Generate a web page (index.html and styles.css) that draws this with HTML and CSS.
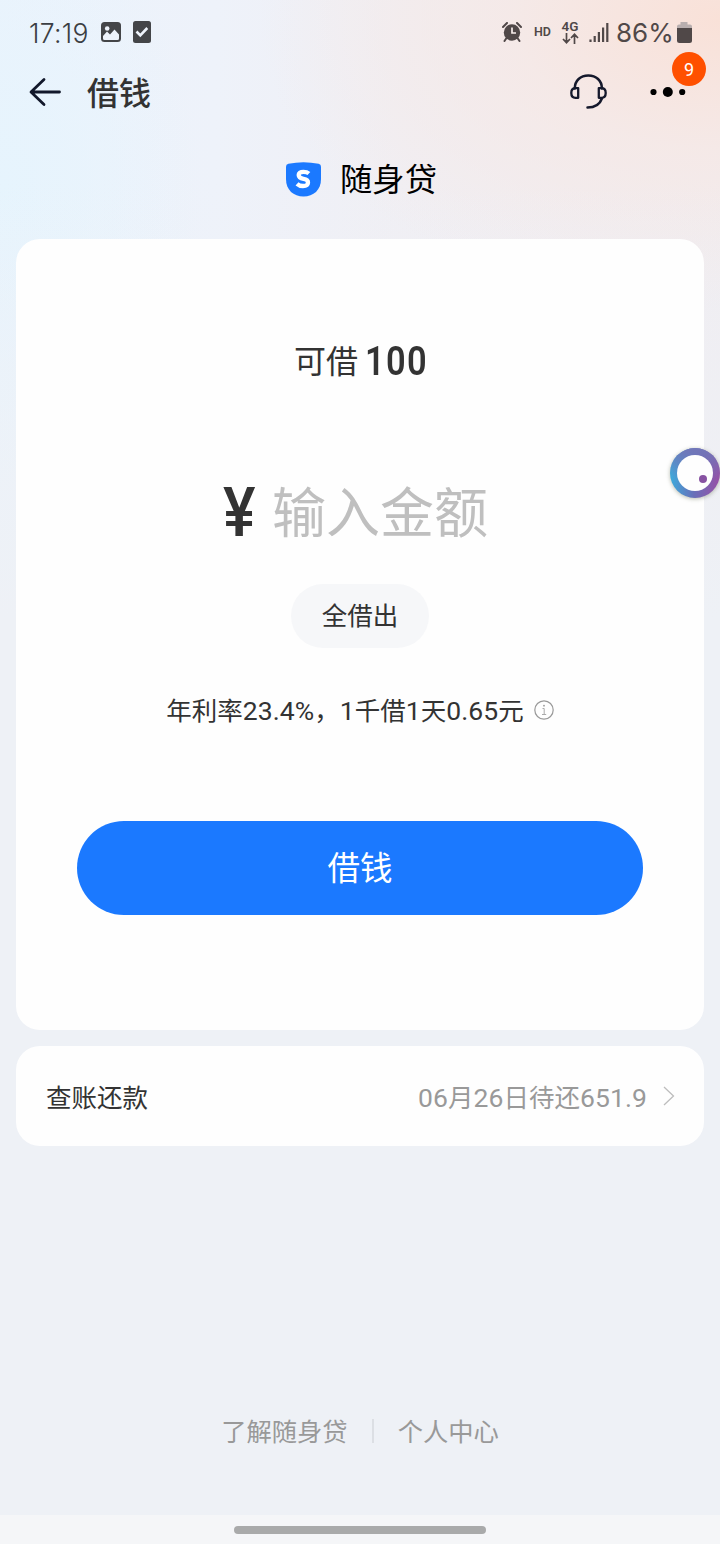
FILE: index.html
```html
<!DOCTYPE html>
<html lang="zh-CN">
<head>
<meta charset="utf-8">
<title>借钱</title>
<link rel="stylesheet" href="styles.css">
</head>
<body>
<div class="screen">
  <div class="status">
    <div class="status-left">
      <span class="clock">17:19</span>
      <svg width="20" height="20" viewBox="0 0 20 20"><rect width="20" height="20" rx="3.5" fill="#444548"/><circle cx="6.2" cy="6.5" r="2.3" fill="#eef3fb"/><path d="M2 16.500V14l4-4.500 3 3 4.500-5 4.500 5v4q0 1.500-1.500 1.500h-13q-1.500 0-1.500-1.500z" fill="#eef3fb"/></svg>
      <svg class="task" width="18" height="22" viewBox="0 0 18 22"><rect width="18" height="22" rx="2.500" fill="#444548"/><path d="M3.500 10.500l3.800 3.800 7-7.300" fill="none" stroke="#eef3fb" stroke-width="2.600"/></svg>
    </div>
    <div class="status-right">
      <svg width="20" height="20" viewBox="0 0 20 20"><circle cx="10" cy="10.500" r="8.200" fill="#504848"/><path d="M1 5l4-4M19 5l-4-4M4.500 16l-2 3M15.500 16l2 3" stroke="#504848" stroke-width="2" stroke-linecap="round"/><path d="M10 5.500v5.500h4" fill="none" stroke="#f7eeec" stroke-width="1.700"/></svg>
      <span class="hd">HD</span>
      <span class="net"><b>4G</b><svg width="17" height="11" viewBox="0 0 17 11"><path d="M4.500 0v9.500M1 6l3.500 3.700L8 6M12.500 11V1.500M9 5l3.500-3.700L16 5" fill="none" stroke="#504848" stroke-width="1.700"/></svg></span>
      <svg class="signal" width="20" height="20" viewBox="0 0 20 20"><path d="M1.500 20v-2.500M5.700 20v-6M9.900 20v-10M14.100 20v-14.500M18.300 20V1" stroke="#504848" stroke-width="2.200"/></svg>
      <span class="percent">86%</span>
      <svg class="battery" width="15" height="21" viewBox="0 0 15 21"><path d="M3.500 0h7v2.500H13q2 0 2 2V7H0V4.500q0-2 2-2h1.500z" fill="#b9afaf"/><path d="M0 6h15v12.500q0 2.500-2.500 2.500h-10Q0 21 0 18.500z" fill="#504848"/></svg>
    </div>
  </div>

  <header class="nav">
    <svg class="back" width="34" height="30" viewBox="0 0 34 30"><path d="M31.500 15H3.500M16 2.500L3 15 16 27.500" fill="none" stroke="#12182b" stroke-width="2.800" stroke-linecap="round" stroke-linejoin="round"/></svg>
    <h1>借钱</h1>
    <svg class="service" width="37" height="36" viewBox="0 0 37 36"><path d="M4.800 14.500C4.800 6.500 10.500 1.500 18.300 1.500s13.600 5 13.600 13M31.900 24.500C30 30 25 33.500 17.500 33.500" fill="none" stroke="#15192c" stroke-width="2.500" stroke-linecap="round"/><path d="M8.200 14.200H5.500Q1.300 14.200 1.300 19t4.200 4.800h2.700zM28.800 14.200h2.700q4.200 0 4.200 4.800t-4.200 4.800h-2.700z" fill="none" stroke="#15192c" stroke-width="2.300" stroke-linejoin="round"/></svg>
    <div class="more">
      <svg width="36" height="12" viewBox="0 0 36 12"><circle cx="3.500" cy="6" r="3.100"/><circle cx="17.800" cy="6" r="5"/><circle cx="32.200" cy="6" r="3.100"/></svg>
      <span class="badge">9</span>
    </div>
  </header>

  <div class="brand">
    <svg width="35" height="35" viewBox="0 0 35 35"><path d="M0 4.500Q0 2.200 2.400 1.700 17.500-1.300 32.600 1.700 35 2.200 35 4.500V17C35 28 27.500 34.500 17.500 34.500S0 28 0 17z" fill="#1b79ff"/><path d="M22.900 11.500Q21 9.800 17.400 9.800c-6.400 0-6.200 6.100.1 7 6.200.9 6 7.200-.5 7.200q-3.600 0-6-2.200" fill="none" stroke="#fff" stroke-width="4.300"/></svg>
    <span>随身贷</span>
  </div>

  <main class="borrow">
    <div class="limit"><span>可借</span><b>100</b></div>
    <div class="amount"><span class="yen">¥</span><span class="placeholder">输入金额</span></div>
    <div class="all">全借出</div>
    <div class="rate"><span>年利率<em>23.4%</em>，<em>1</em>千借<em>1</em>天<em>0.65</em>元</span><svg width="20" height="20" viewBox="0 0 20 20"><circle cx="10" cy="10" r="9.200" fill="none" stroke="#999" stroke-width="1.200"/><path d="M8.500 8.500H10.200V14.500M8 14.500h4.200" fill="none" stroke="#aaa"/><circle cx="10" cy="5.700" r=".9" fill="#999"/></svg></div>
    <div class="submit">借钱</div>
  </main>

  <section class="bill">
    <span>查账还款</span>
    <span class="due"><em>06</em>月<em>26</em>日待还<em>651.9</em></span>
    <svg width="12" height="20" viewBox="0 0 12 20"><path d="M1 1l9.500 9L1 19" fill="none" stroke="#bdbdbd" stroke-width="1.300"/></svg>
  </section>

  <footer class="links"><span>了解随身贷</span><i></i><span>个人中心</span></footer>
  <div class="gesture"><i></i></div>

  <svg class="assist" width="56" height="60" viewBox="0 0 56 60">
    <defs><linearGradient id="ring" x1="0" y1=".65" x2="1" y2=".75"><stop offset="0" stop-color="#3cabdc"/><stop offset=".5" stop-color="#686fb9"/><stop offset="1" stop-color="#9950a6"/></linearGradient><linearGradient id="ringTop" x1="0" y1="0" x2="0" y2="1"><stop offset="0" stop-color="#7276b8"/><stop offset=".6" stop-color="#7276b8" stop-opacity="0"/></linearGradient></defs>
    <circle cx="31" cy="30" r="25" fill="url(#ring)"/><circle cx="31" cy="30" r="25" fill="url(#ringTop)"/><circle cx="31" cy="30" r="18" fill="#fefefe"/><circle cx="39" cy="36" r="4" fill="#8752a2"/>
  </svg>
</div>
</body>
</html>
```
FILE: styles.css
```css
* { box-sizing: border-box; }
body { margin: 0; font-family: Roboto, "Noto Sans CJK SC", sans-serif; color: #333; }
svg { display: block; flex: none; }
em { font-style: normal; font-size: 26.500px; letter-spacing: .1px; }
.screen {
  position: relative;
  width: 720px; height: 1544px; overflow: hidden;
  display: flex; flex-direction: column;
  background:
    linear-gradient(to bottom, rgba(238,241,246,0) 0, rgba(238,241,246,0) 180px, #eef1f6 620px),
    radial-gradient(ellipse 460px 290px at 720px 20px, #f9e1d8 0, rgba(246,232,229,.8) 45%, rgba(240,238,241,0) 100%),
    radial-gradient(ellipse 200px 300px at 0 190px, #e6f4fd 0, rgba(236,243,251,0) 100%),
    linear-gradient(to right, #ebf3fc 0, #eef2fa 30%, #f0eff4 55%, #f0edf1 100%);
}
.status { height: 64px; padding: 0 28px 0 29px; display: flex; justify-content: space-between; align-items: center; }
.status-left, .status-right { display: flex; align-items: center; }
.clock { width: 60px; margin-right: 12px; font: 300 26.500px/30px Inter, sans-serif; letter-spacing: .3px; color: #3b3e43; white-space: nowrap; padding-top: 1px; }
.task { margin-left: 12px; }
.status-right { color: #504848; }
.hd { width: 18px; margin-left: 12px; font: 600 12.500px/16px Roboto, sans-serif; white-space: nowrap; }
.net { width: 18px; margin-left: 9px; display: flex; flex-direction: column; align-items: center; gap: 1px; }
.net b { font: 600 13.500px/12px Roboto, sans-serif; }
.signal { margin-left: 10px; }
.percent { width: 56px; margin-left: 7px; padding-top: 1px; font: 26px/30px Inter, sans-serif; letter-spacing: 0; white-space: nowrap; }
.battery { margin-left: 5px; }
.nav { height: 56px; padding: 0 34px 0 28px; display: flex; align-items: center; }
.nav h1 { margin: 0 auto 0 25px; font-size: 32px; line-height: 48px; font-weight: 500; padding-top: 4px; }
.service { margin-right: 43px; }
.more { position: relative; }
.more > svg { margin-top: -1px; }
.badge { position: absolute; left: 22px; top: -35px; width: 34px; height: 34px; border-radius: 50%; background: #ff5000; color: #fff; font-size: 18px; line-height: 35px; text-align: center; }
.brand { height: 119px; display: flex; justify-content: center; align-items: center; gap: 19px; padding-left: 3px; font-size: 32.300px; line-height: 48px; color: #000; }
.brand span { padding-top: 1px; }
.borrow { height: 791px; margin: 0 16px; padding-top: 98px; border-radius: 24px; background: #fefefe; display: flex; flex-direction: column; align-items: center; }
.limit { height: 48px; display: flex; align-items: center; font-size: 32px; line-height: 48px; }
.limit span { padding-top: 1px; }
.limit b { width: 61px; margin-left: 7px; font-size: 40.500px; font-weight: 600; line-height: 48px; letter-spacing: 1.500px; transform: scaleX(.85); transform-origin: left; white-space: nowrap; }
.amount { height: 80px; margin-top: 86px; display: flex; align-items: center; }
.yen { width: 32px; margin: 3px 17px 0 -9px; font-size: 68px; font-weight: 500; line-height: 80px; transform: scaleX(.9); transform-origin: left; }
.placeholder { padding-top: 7px; font-size: 54px; line-height: 80px; color: #bfbfbf; }
.all { width: 138px; height: 64px; margin-top: 33px; border-radius: 32px; background: #f6f7f9; font-size: 25.500px; line-height: 64px; text-align: center; }
.rate { height: 40px; margin-top: 42px; display: flex; align-items: center; gap: 10px; font-size: 25.500px; line-height: 40px; }
.rate span { padding-top: 2px; }
.submit { width: 566px; height: 94px; margin-top: 91px; border-radius: 47px; background: #1b79ff; color: #fff; font-size: 32.500px; line-height: 96px; text-align: center; }
.bill { height: 100px; margin: 16px 16px 0; padding: 0 29px 0 30px; border-radius: 24px; background: #fefefe; display: flex; align-items: center; font-size: 25.500px; line-height: 40px; }
.bill span { padding-top: 4px; }
.bill .due { margin: 0 16px 0 auto; color: #999; }
.links { height: 40px; margin-top: 265px; display: flex; justify-content: center; align-items: center; font-size: 25.300px; line-height: 40px; color: #999; }
.links span { padding-top: 4px; }
.links i { width: 2px; height: 24px; margin: 0 24px; background: #dcdfe4; }
.gesture { height: 29px; margin-top: auto; background: #f5f6f8; display: flex; justify-content: center; align-items: center; }
.gesture i { width: 252px; height: 8px; border-radius: 4px; background: #a9aaaa; }
.assist { position: absolute; left: 664px; top: 443px; filter: drop-shadow(0 1px 2px rgba(80,90,60,.4)); }
```
